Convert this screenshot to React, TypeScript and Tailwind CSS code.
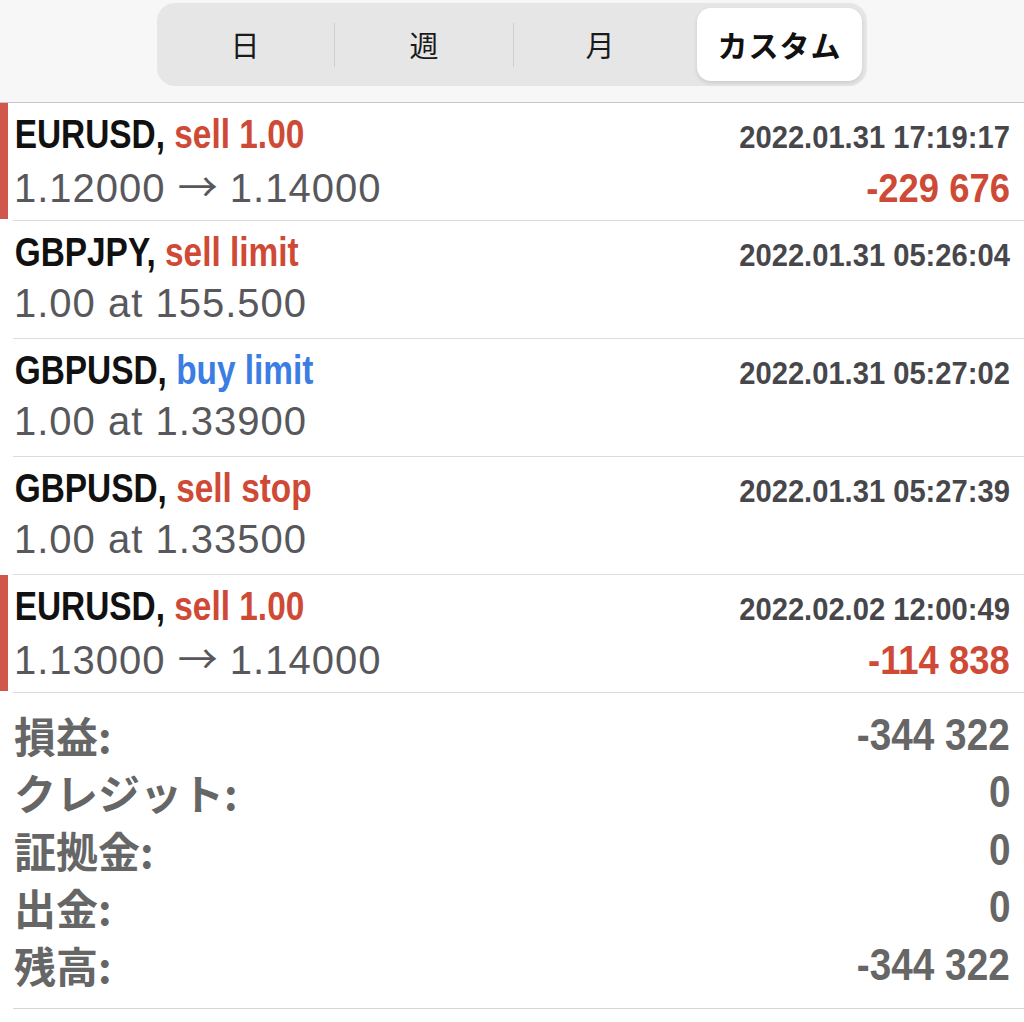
import React from "react";

const BOLD = '"Liberation Sans", Arial, "Noto Sans CJK JP", sans-serif';
const REG = '"Liberation Sans", Arial, "Noto Sans CJK JP", sans-serif';
const JP = '"Noto Sans CJK JP", "Noto Sans", sans-serif';

type Row = {
  sym: string;
  op: string;
  opColor: string;
  date: string;
  a: string;
  b?: string;
  profit?: string;
  bar?: boolean;
};

const rows: Row[] = [
  { sym: "EURUSD,", op: "sell 1.00", opColor: "text-[#cf4a36]", date: "2022.01.31 17:19:17", a: "1.12000", b: "1.14000", profit: "-229 676", bar: true },
  { sym: "GBPJPY,", op: "sell limit", opColor: "text-[#cf4a36]", date: "2022.01.31 05:26:04", a: "1.00 at 155.500" },
  { sym: "GBPUSD,", op: "buy limit", opColor: "text-[#3b7de2]", date: "2022.01.31 05:27:02", a: "1.00 at 1.33900" },
  { sym: "GBPUSD,", op: "sell stop", opColor: "text-[#cf4a36]", date: "2022.01.31 05:27:39", a: "1.00 at 1.33500" },
  { sym: "EURUSD,", op: "sell 1.00", opColor: "text-[#cf4a36]", date: "2022.02.02 12:00:49", a: "1.13000", b: "1.14000", profit: "-114 838", bar: true },
];

const summary = [
  { k: "損益:", v: "-344 322" },
  { k: "クレジット:", v: "0" },
  { k: "証拠金:", v: "0" },
  { k: "出金:", v: "0" },
  { k: "残高:", v: "-344 322" },
];

export default function App() {
  return (
    <div className="w-[1024px] h-[1022px] bg-white overflow-hidden">
      {/* Header segmented control */}
      <div className="h-[103px] bg-[#f7f7f7] border-b border-[#c8c8c8] flex pl-[157px] pt-[3px]">
        <div className="w-[710px] h-[83px] bg-[#e6e6e6] rounded-[18px] p-[5px] flex items-stretch">
          <div className="w-[172px] flex items-center justify-center pr-[6px] text-[29px] text-[#1a1a1a]" style={{ fontFamily: JP }}>日</div>
          <div className="self-center w-px h-[44px] bg-[#cfcfcf]" />
          <div className="w-[178px] flex items-center justify-center text-[29px] text-[#1a1a1a]" style={{ fontFamily: JP }}>週</div>
          <div className="self-center w-px h-[44px] bg-[#cfcfcf]" />
          <div className="w-[183px] flex items-center justify-center pr-[11px] text-[29px] text-[#1a1a1a]" style={{ fontFamily: JP }}>月</div>
          <div className="flex-1 bg-white rounded-[14px] shadow-[0_2px_4px_rgba(0,0,0,0.12)] flex items-center justify-center text-[30px] font-bold text-[#111] tracking-[1px]" style={{ fontFamily: JP }}>
            カスタム
          </div>
        </div>
      </div>

      {/* Rows */}
      {rows.map((r, idx) => (
        <div key={idx} className="flex h-[118px]">
          <div className={`w-[8px] h-[116px] ${r.bar ? "bg-[#d0574b]" : "bg-transparent"}`} />
          <div className="flex-1 ml-[5px] border-b border-[#dcdcdc] pr-[14px] pt-[11px] flex flex-col">
            <div className="flex items-baseline justify-between">
              <span className="inline-block whitespace-nowrap text-[40px] font-bold leading-none scale-x-[0.835] origin-left pl-[2px]" style={{ fontFamily: BOLD }}>
                <span className="text-[#111]">{r.sym}</span> <span className={r.opColor}>{r.op}</span>
              </span>
              <span className="inline-block whitespace-nowrap text-[31px] font-bold leading-none text-[#47474b] scale-x-[0.94] origin-right" style={{ fontFamily: BOLD }}>
                {r.date}
              </span>
            </div>
            <div className="flex items-baseline justify-between mt-[11px]">
              <span className="whitespace-nowrap text-[40px] leading-none text-[#58585c] tracking-[1px] pl-[1px]" style={{ fontFamily: REG }}>
                {r.a}
                {r.b && (
                  <>
                    {" "}
                    <span className="leading-none tracking-normal" style={{ fontFamily: JP }}>→</span>
                    {" "}
                    {r.b}
                  </>
                )}
              </span>
              {r.profit && (
                <span className="inline-block whitespace-nowrap text-[40px] font-bold leading-none text-[#cf4a36] scale-x-[0.91] origin-right" style={{ fontFamily: BOLD }}>
                  {r.profit}
                </span>
              )}
            </div>
          </div>
        </div>
      ))}

      {/* Summary */}
      <div className="ml-[13px] pr-[14px] pt-[13px] pb-[14px] border-b border-[#d6d6d6]">
        {summary.map((s) => (
          <div key={s.k} className="h-[57.5px] flex items-center justify-between">
            <div className="text-[42px] font-bold text-[#666] leading-none pl-[1px]" style={{ fontFamily: JP }}>{s.k}</div>
            <span className="inline-block whitespace-nowrap text-[44px] font-bold text-[#666] leading-none scale-x-[0.88] origin-right" style={{ fontFamily: BOLD }}>{s.v}</span>
          </div>
        ))}
      </div>
    </div>
  );
}
